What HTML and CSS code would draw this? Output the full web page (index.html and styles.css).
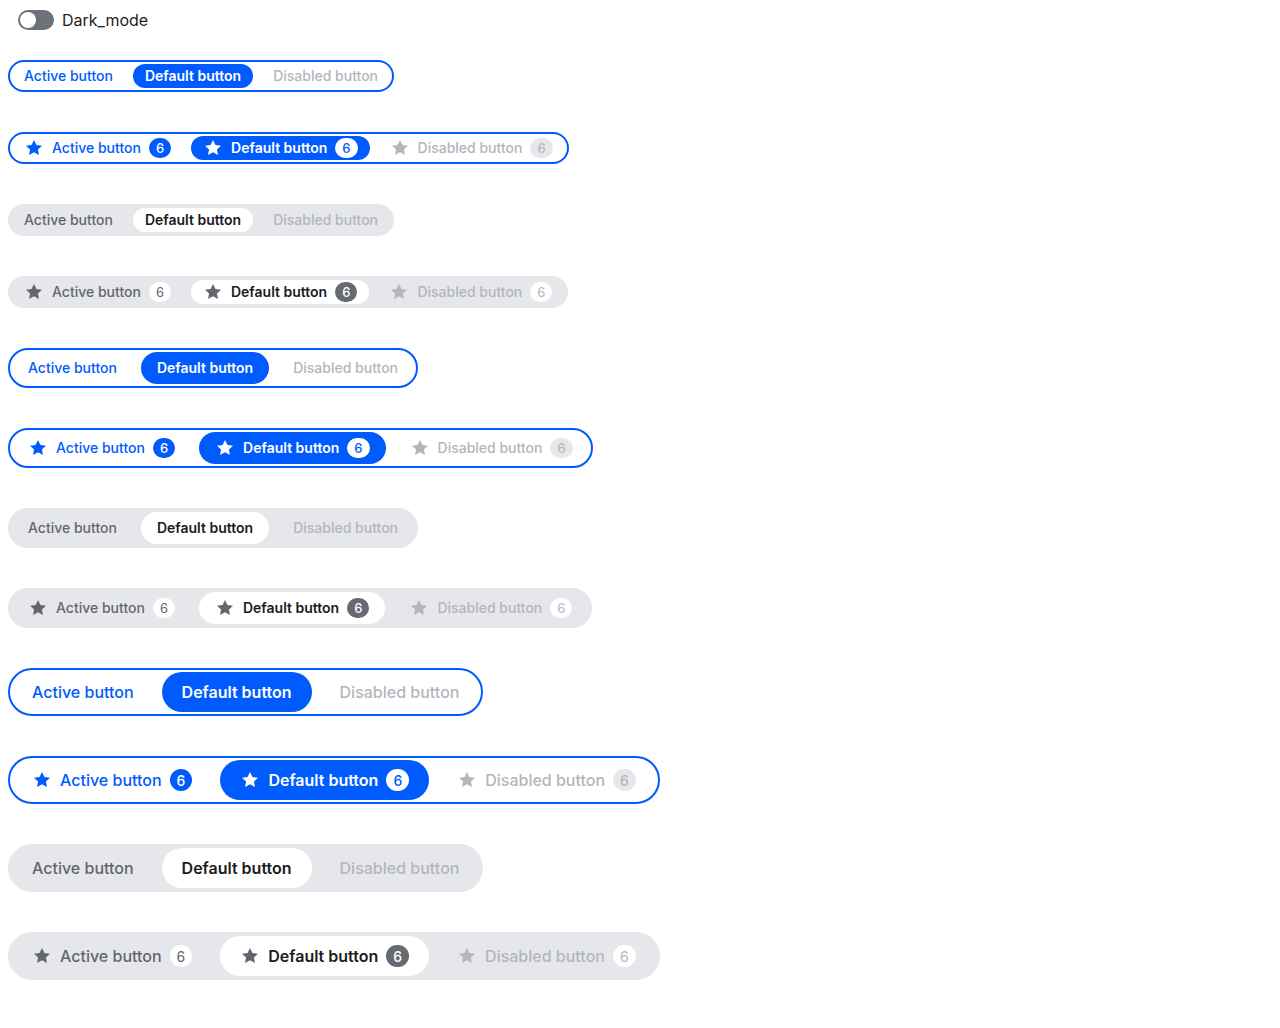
FILE: index.html
```html
<!DOCTYPE html>
<html lang="en">
<head>
<meta charset="utf-8">
<title>Segmented buttons</title>
<link rel="stylesheet" href="styles.css">
</head>
<body>
<div class="page">
  <label class="theme">
    <span class="toggle"><span class="knob"></span></span>
    <span class="theme-label">Dark_mode</span>
  </label>

  <div class="rows">
    <!-- SMALL -->
    <div class="seg seg--outline seg--s">
      <span class="btn btn--active">Active button</span>
      <span class="btn btn--default">Default button</span>
      <span class="btn btn--disabled">Disabled button</span>
    </div>
    <div class="seg seg--outline seg--s">
      <span class="btn btn--active"><svg class="star" viewBox="0 0 20 20"><path d="M10 1.9l2.45 5.05 5.55.72-4.07 3.86 1.03 5.5L10 14.36l-4.96 2.67 1.03-5.5L2 7.67l5.55-.72z"/></svg>Active button<span class="badge">6</span></span>
      <span class="btn btn--default"><svg class="star" viewBox="0 0 20 20"><path d="M10 1.9l2.45 5.05 5.55.72-4.07 3.86 1.03 5.5L10 14.36l-4.96 2.67 1.03-5.5L2 7.67l5.55-.72z"/></svg>Default button<span class="badge">6</span></span>
      <span class="btn btn--disabled"><svg class="star" viewBox="0 0 20 20"><path d="M10 1.9l2.45 5.05 5.55.72-4.07 3.86 1.03 5.5L10 14.36l-4.96 2.67 1.03-5.5L2 7.67l5.55-.72z"/></svg>Disabled button<span class="badge">6</span></span>
    </div>
    <div class="seg seg--gray seg--s">
      <span class="btn btn--active">Active button</span>
      <span class="btn btn--default">Default button</span>
      <span class="btn btn--disabled">Disabled button</span>
    </div>
    <div class="seg seg--gray seg--s">
      <span class="btn btn--active"><svg class="star" viewBox="0 0 20 20"><path d="M10 1.9l2.45 5.05 5.55.72-4.07 3.86 1.03 5.5L10 14.36l-4.96 2.67 1.03-5.5L2 7.67l5.55-.72z"/></svg>Active button<span class="badge">6</span></span>
      <span class="btn btn--default"><svg class="star" viewBox="0 0 20 20"><path d="M10 1.9l2.45 5.05 5.55.72-4.07 3.86 1.03 5.5L10 14.36l-4.96 2.67 1.03-5.5L2 7.67l5.55-.72z"/></svg>Default button<span class="badge">6</span></span>
      <span class="btn btn--disabled"><svg class="star" viewBox="0 0 20 20"><path d="M10 1.9l2.45 5.05 5.55.72-4.07 3.86 1.03 5.5L10 14.36l-4.96 2.67 1.03-5.5L2 7.67l5.55-.72z"/></svg>Disabled button<span class="badge">6</span></span>
    </div>

    <!-- MEDIUM -->
    <div class="seg seg--outline seg--m">
      <span class="btn btn--active">Active button</span>
      <span class="btn btn--default">Default button</span>
      <span class="btn btn--disabled">Disabled button</span>
    </div>
    <div class="seg seg--outline seg--m">
      <span class="btn btn--active"><svg class="star" viewBox="0 0 20 20"><path d="M10 1.9l2.45 5.05 5.55.72-4.07 3.86 1.03 5.5L10 14.36l-4.96 2.67 1.03-5.5L2 7.67l5.55-.72z"/></svg>Active button<span class="badge">6</span></span>
      <span class="btn btn--default"><svg class="star" viewBox="0 0 20 20"><path d="M10 1.9l2.45 5.05 5.55.72-4.07 3.86 1.03 5.5L10 14.36l-4.96 2.67 1.03-5.5L2 7.67l5.55-.72z"/></svg>Default button<span class="badge">6</span></span>
      <span class="btn btn--disabled"><svg class="star" viewBox="0 0 20 20"><path d="M10 1.9l2.45 5.05 5.55.72-4.07 3.86 1.03 5.5L10 14.36l-4.96 2.67 1.03-5.5L2 7.67l5.55-.72z"/></svg>Disabled button<span class="badge">6</span></span>
    </div>
    <div class="seg seg--gray seg--m">
      <span class="btn btn--active">Active button</span>
      <span class="btn btn--default">Default button</span>
      <span class="btn btn--disabled">Disabled button</span>
    </div>
    <div class="seg seg--gray seg--m">
      <span class="btn btn--active"><svg class="star" viewBox="0 0 20 20"><path d="M10 1.9l2.45 5.05 5.55.72-4.07 3.86 1.03 5.5L10 14.36l-4.96 2.67 1.03-5.5L2 7.67l5.55-.72z"/></svg>Active button<span class="badge">6</span></span>
      <span class="btn btn--default"><svg class="star" viewBox="0 0 20 20"><path d="M10 1.9l2.45 5.05 5.55.72-4.07 3.86 1.03 5.5L10 14.36l-4.96 2.67 1.03-5.5L2 7.67l5.55-.72z"/></svg>Default button<span class="badge">6</span></span>
      <span class="btn btn--disabled"><svg class="star" viewBox="0 0 20 20"><path d="M10 1.9l2.45 5.05 5.55.72-4.07 3.86 1.03 5.5L10 14.36l-4.96 2.67 1.03-5.5L2 7.67l5.55-.72z"/></svg>Disabled button<span class="badge">6</span></span>
    </div>

    <!-- LARGE -->
    <div class="seg seg--outline seg--l">
      <span class="btn btn--active">Active button</span>
      <span class="btn btn--default">Default button</span>
      <span class="btn btn--disabled">Disabled button</span>
    </div>
    <div class="seg seg--outline seg--l">
      <span class="btn btn--active"><svg class="star" viewBox="0 0 20 20"><path d="M10 1.9l2.45 5.05 5.55.72-4.07 3.86 1.03 5.5L10 14.36l-4.96 2.67 1.03-5.5L2 7.67l5.55-.72z"/></svg>Active button<span class="badge">6</span></span>
      <span class="btn btn--default"><svg class="star" viewBox="0 0 20 20"><path d="M10 1.9l2.45 5.05 5.55.72-4.07 3.86 1.03 5.5L10 14.36l-4.96 2.67 1.03-5.5L2 7.67l5.55-.72z"/></svg>Default button<span class="badge">6</span></span>
      <span class="btn btn--disabled"><svg class="star" viewBox="0 0 20 20"><path d="M10 1.9l2.45 5.05 5.55.72-4.07 3.86 1.03 5.5L10 14.36l-4.96 2.67 1.03-5.5L2 7.67l5.55-.72z"/></svg>Disabled button<span class="badge">6</span></span>
    </div>
    <div class="seg seg--gray seg--l">
      <span class="btn btn--active">Active button</span>
      <span class="btn btn--default">Default button</span>
      <span class="btn btn--disabled">Disabled button</span>
    </div>
    <div class="seg seg--gray seg--l">
      <span class="btn btn--active"><svg class="star" viewBox="0 0 20 20"><path d="M10 1.9l2.45 5.05 5.55.72-4.07 3.86 1.03 5.5L10 14.36l-4.96 2.67 1.03-5.5L2 7.67l5.55-.72z"/></svg>Active button<span class="badge">6</span></span>
      <span class="btn btn--default"><svg class="star" viewBox="0 0 20 20"><path d="M10 1.9l2.45 5.05 5.55.72-4.07 3.86 1.03 5.5L10 14.36l-4.96 2.67 1.03-5.5L2 7.67l5.55-.72z"/></svg>Default button<span class="badge">6</span></span>
      <span class="btn btn--disabled"><svg class="star" viewBox="0 0 20 20"><path d="M10 1.9l2.45 5.05 5.55.72-4.07 3.86 1.03 5.5L10 14.36l-4.96 2.67 1.03-5.5L2 7.67l5.55-.72z"/></svg>Disabled button<span class="badge">6</span></span>
    </div>
  </div>
</div>
</body>
</html>
```

FILE: styles.css
```css
html, body {
  margin: 0;
  background: #ffffff;
}

body {
  padding: 8px;
  font-family: Inter, "Liberation Sans", sans-serif;
  color: #1f2023;
}

.page {
  display: flex;
  flex-direction: column;
  align-items: flex-start;
}

.theme {
  display: flex;
  align-items: center;
  height: 24px;
  margin-left: 10px;
  gap: 8px;
}

.toggle {
  display: flex;
  align-items: center;
  width: 36px;
  height: 20px;
  padding: 2px;
  box-sizing: border-box;
  border-radius: 10px;
  background: #6e7179;
}

.knob {
  width: 16px;
  height: 16px;
  border-radius: 50%;
  background: #ffffff;
}

.theme-label {
  font-size: 16px;
  font-weight: 400;
  color: #1f2023;
}

.rows {
  display: flex;
  flex-direction: column;
  align-items: flex-start;
  gap: 40px;
  margin-top: 28px;
}

.seg {
  display: inline-flex;
  align-items: center;
  gap: 8px;
  padding: 2px;
  border: 2px solid transparent;
  border-radius: 999px;
}

.seg--outline {
  border-color: #005bff;
  background: #ffffff;
}

.seg--gray {
  border-color: #e6e7eb;
  background: #e6e7eb;
}

.btn {
  display: inline-flex;
  align-items: center;
  gap: 8px;
  box-sizing: border-box;
  border-radius: 999px;
  font-weight: 500;
  white-space: nowrap;
}

.btn--default {
  font-weight: 600;
}

.seg--s .btn {
  height: 24px;
  padding: 0 12px 1px;
  font-size: 14px;
}

.seg--m .btn {
  height: 32px;
  padding: 0 16px 1px;
  font-size: 14px;
}

.seg--l .btn {
  height: 40px;
  padding: 0 20px;
  font-size: 16px;
}

.star {
  width: 20px;
  height: 20px;
  flex: none;
  fill: currentColor;
}

.badge {
  display: inline-flex;
  align-items: center;
  justify-content: center;
  box-sizing: border-box;
  min-width: 22px;
  height: 20px;
  padding: 0 7px;
  border-radius: 10px;
  font-size: 13px;
  font-weight: 500;
}

.seg--l .badge {
  min-width: 22px;
  height: 22px;
  border-radius: 11px;
  font-size: 14px;
}

/* outline variant */
.seg--outline .btn--active { color: #005bff; }
.seg--outline .btn--active .badge { background: #005bff; color: #ffffff; }
.seg--outline .btn--default { background: #005bff; color: #ffffff; }
.seg--outline .btn--default .badge { background: #ffffff; color: #005bff; }
.seg--outline .btn--disabled { color: #b3b6bd; }
.seg--outline .btn--disabled .badge { background: #e6e7eb; color: #b3b6bd; }

/* gray variant */
.seg--gray .btn--active { color: #63666e; }
.seg--gray .btn--active .badge { background: #ffffff; color: #63666e; font-weight: 400; }
.seg--gray .btn--default { background: #ffffff; color: #1a1b1e; }
.seg--gray .btn--default .star { fill: #63666e; }
.seg--gray .btn--default .badge { background: #676a73; color: #ffffff; }
.seg--gray .btn--disabled { color: #b3b6bd; }
.seg--gray .btn--disabled .badge { background: #ffffff; color: #b3b6bd; font-weight: 400; }
```
